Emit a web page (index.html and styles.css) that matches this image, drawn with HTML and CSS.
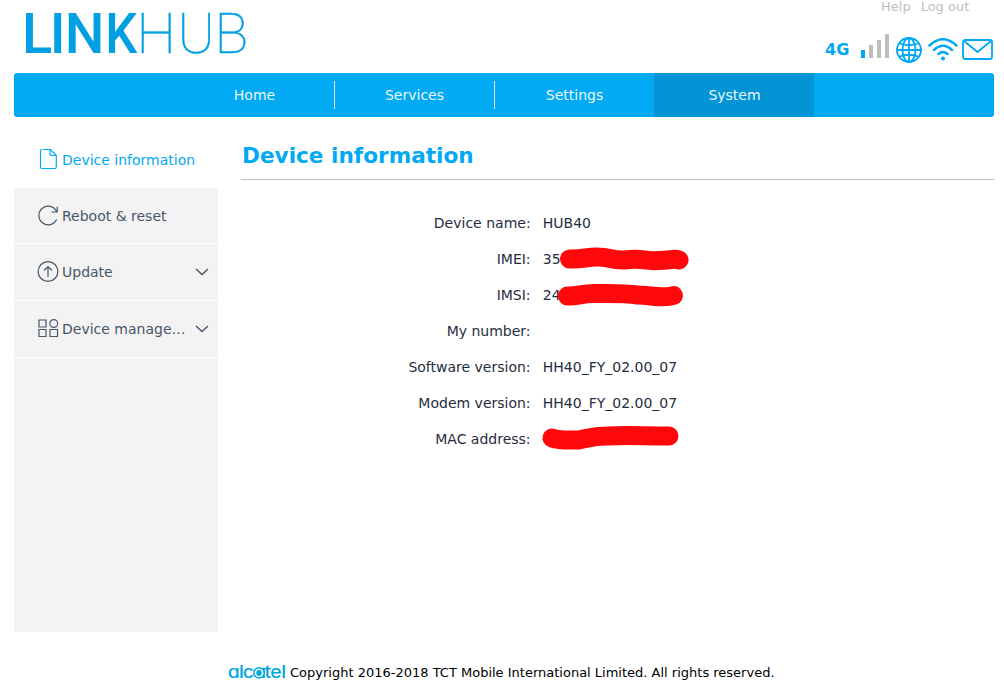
FILE: index.html
```html
<!DOCTYPE html>
<html lang="en">
<head>
<meta charset="utf-8">
<title>LINKHUB - Device information</title>
<link rel="stylesheet" href="styles.css">
</head>
<body>
<div class="page">
  <header class="header">
    <svg class="logo" width="240" height="72" role="img" aria-label="LINKHUB">
      <text class="logo-bold" x="8 35.800 50.800" y="53">LIN</text>
      <text class="logo-bold" x="91.300" y="53" textLength="32" lengthAdjust="spacingAndGlyphs">K</text>
      <text class="logo-thin" x="122.500 163.500 200.500" y="53">HUB</text>
    </svg>
    <div class="header-side">
      <div class="links"><a>Help</a><a>Log out</a></div>
      <div class="status">
        <span class="network">4G</span>
        <svg class="signal" width="28" height="24"><path class="on" d="M0 16h4v8H0z"/><path class="off" d="M8 11h4v13H8zM16 6h4v18h-4zM24 0h4v24h-4z"/></svg>
        <svg class="globe line" width="26" height="26"><circle cx="13" cy="13" r="12"/><ellipse cx="13" cy="13" rx="6.500" ry="12"/><path d="M13 1v24M1 13h24M3.500 6.500Q13 10 22.500 6.500M3.500 19.500Q13 16 22.500 19.500"/></svg>
        <svg class="wifi line" width="30" height="23"><path d="M1.500 7.500Q15-5 28.500 7.500M6 12Q15 3.500 24 12M10.500 16Q15 12 19.500 16"/><circle class="on" cx="15" cy="20.500" r=".8"/></svg>
        <svg class="mail line" width="31" height="21"><rect x="1" y="1" width="29" height="19" rx="2"/><path d="M2 2l13.500 11L29 2"/></svg>
      </div>
    </div>
  </header>
  <nav class="nav">
    <a>Home</a><a>Services</a><a>Settings</a><a class="current">System</a>
  </nav>
  <div class="content">
    <aside class="sidebar">
      <a class="item active"><svg class="icon" width="24" height="24"><path d="M6.500 1.500H14.500L20.300 7.500V19q0 1.500-1.500 1.500H6Q4.500 20.500 4.500 19V3Q4.500 1.500 6 1.500M14 1.500V5.500Q14 7.500 16 7.500H20"/></svg><span>Device information</span></a>
      <a class="item"><svg class="icon" width="24" height="24"><path d="M20.600 7.500A9.300 9.300 0 1 0 20.600 15.500M21.200 2.500V8H15.500"/></svg><span>Reboot &amp; reset</span></a>
      <a class="item"><svg class="icon" width="24" height="24"><circle cx="12" cy="11.500" r="9.900"/><path d="M12 17V6.500M8 10.500l4-4 4 4"/></svg><span>Update</span><svg class="chevron" width="14" height="8"><path d="M1 1l6 5.500L13 1"/></svg></a>
      <a class="item"><svg class="icon" width="24" height="24"><path d="M3 3h7v7H3zM3 12.500h7v7H3zM14 12.500h7.500v7H14z"/><circle cx="17.700" cy="6.500" r="3.900"/></svg><span>Device manage…</span><svg class="chevron" width="14" height="8"><path d="M1 1l6 5.500L13 1"/></svg></a>
    </aside>
    <main class="main">
      <h1>Device information</h1>
      <dl class="info">
        <dt>Device name:</dt><dd>HUB40</dd>
        <dt>IMEI:</dt><dd>35<svg class="mark imei" width="130" height="24"><path d="M10.500 12C24 12.500 27 10 38 10C52 10 51 13.500 66 13C84 10.500 84 14.500 99 13.500C113 13.500 114 11 120 13"/></svg></dd>
        <dt>IMSI:</dt><dd>24<svg class="mark imsi" width="130" height="24"><path d="M11.500 13C22 13.500 25 10.500 38 10.500C58 10.500 67 10 82 12C94 12 106 16 117.500 12.500"/></svg></dd>
        <dt>My number:</dt><dd></dd>
        <dt>Software version:</dt><dd>HH40_FY_02.00_07</dd>
        <dt>Modem version:</dt><dd>HH40_FY_02.00_07</dd>
        <dt>MAC address:</dt><dd><svg class="mark mac" width="140" height="26"><path d="M9 15C18 18 28 17 36 17C46 15 50 13 64 13C86 12 99 13 126 13"/></svg></dd>
      </dl>
    </main>
  </div>
  <footer class="footer">
    <svg class="brand" width="58" height="20" role="img" aria-label="alcatel"><text transform="scale(1.140 1)" x="-.200 9.700 13 22.800 32 37 46.700" y="14.800">alcatel</text><circle class="ring" cx="31" cy="9.900" r="5.200"/><circle cx="31" cy="9.900" r="2.800"/></svg>
    <span>Copyright 2016-2018 TCT Mobile International Limited. All rights reserved.</span>
  </footer>
</div>
</body>
</html>
```
FILE: styles.css
```css
* { box-sizing: border-box; }
body { margin: 0; background: #fff; font: 14px/20px "DejaVu Sans", Verdana, sans-serif; color: #1f2d3d; }
.page { width: 980px; margin-left: 14px; }
.header { height: 73px; display: flex; justify-content: space-between; }
.logo { display: block; fill: #009fe3; font-family: Roboto, sans-serif; font-size: 56px; overflow: visible; }
.logo-bold { font-weight: 500; }
.logo-thin { font-weight: 100; stroke: #009fe3; stroke-width: .5; }
.header-side { width: 169px; }
.links { display: flex; gap: 10px; padding-left: 56px; height: 34px; font-size: 13px; line-height: 14px; color: #c0c0c0; }
.status { display: flex; align-items: flex-start; color: #00a8f3; }
.network { width: 36px; padding-top: 6px; font-size: 16px; font-weight: bold; }
.signal { margin-right: 7px; }
.globe { margin: 3px 6px 0 0; }
.wifi { margin: 4px 4px 0 0; }
.mail { margin-top: 5px; }
.on { fill: #00a8f3; }
.off { fill: #bdbdbd; }
.line { fill: none; stroke: #00a8f3; stroke-width: 1.8; stroke-linecap: round; flex: none; }
.globe { stroke-width: 1.8; }
.wifi { stroke-width: 2.5; }
.nav { display: flex; height: 44px; padding-left: 160px; background: #02a9f3; border-radius: 3px; }
.nav a { width: 160px; padding-left: 1px; text-align: center; line-height: 44px; color: #e8f7ff; position: relative; }
.nav a:nth-child(-n+2)::after { content: ""; position: absolute; right: -1px; top: 8px; width: 1px; height: 28px; background: #e3e3e3; }
.nav .current { background: #0294d4; }
.content { display: flex; padding-top: 15px; }
.sidebar { width: 204px; height: 500px; background: #f3f3f3; margin-right: 23px; }
.item { height: 57px; display: flex; align-items: center; padding: 0 9px 0 22px; color: #475669; border-bottom: 1px solid #fff; }
.item.active { height: 56px; background: #fff; color: #02a9f3; }
.item:nth-child(2) { height: 56px; }
.item span { width: 125px; margin-left: 2px; white-space: nowrap; }
.item.active span { width: 140px; flex: none; }
.icon { flex: none; fill: none; stroke: currentColor; stroke-width: 1.2; }
.chevron { margin-left: auto; fill: none; stroke: #475669; stroke-width: 1.4; flex: none; }
.main { width: 753px; }
h1 { margin: 0; height: 48px; padding: 10px 0 0 1px; font-size: 21.6px; line-height: 28px; color: #02a9f3; border-bottom: 1px solid #c2c2c2; }
.info { margin: 25px 0 0; display: grid; grid-template-columns: 289.6px 1fr; grid-auto-rows: 36px; column-gap: 12.2px; line-height: 36px; }
dt { text-align: right; }
dd { margin: 0; position: relative; }
.mark { position: absolute; fill: none; stroke: #ff080c; stroke-width: 19; stroke-linecap: round; overflow: visible; }
.imei { left: 16px; top: 6px; }
.imsi { left: 13px; top: 6px; }
.mac { left: 0; top: 2px; }
.footer { display: flex; align-items: center; margin-top: 31px; padding-left: 214px; gap: 4px; font-size: 13px; color: #000; }
.brand { fill: #00a6df; font-family: Inter, sans-serif; font-size: 17px; font-weight: 500; font-feature-settings: "cv11"; overflow: visible; }
.ring { fill: #fff; stroke: #00a6df; stroke-width: 1.5; }
```
